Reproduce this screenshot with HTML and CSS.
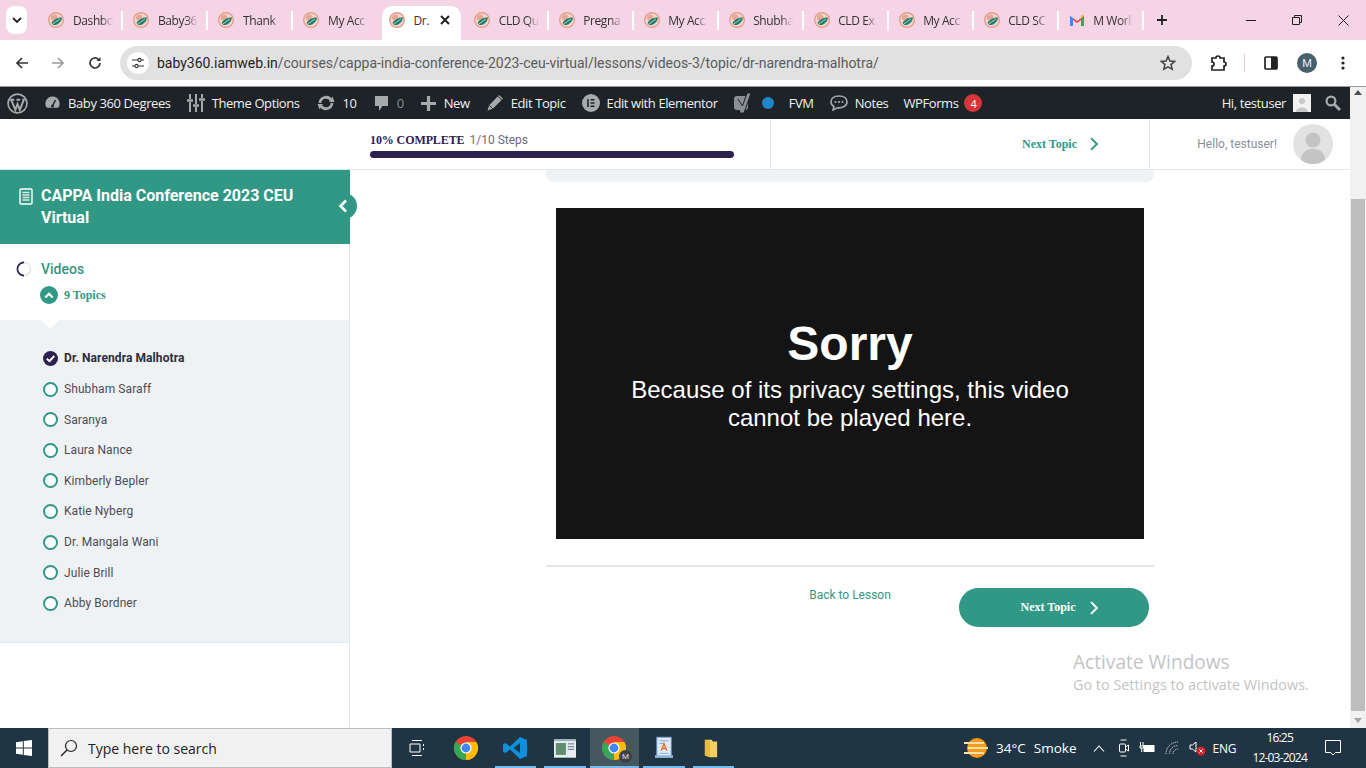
FILE: index.html
```html
<!DOCTYPE html>
<html lang="en">
<head>
    <meta charset="UTF-8">
    <meta name="viewport" content="width=device-width, initial-scale=1.0">
    <title>Dr. Narendra Malhotra</title>
    <link rel="stylesheet" href="styles.css">
</head>
<body>
    <svg class="defs" width="0" height="0">
        <symbol id="fav" viewBox="0 0 16 16">
            <circle cx="8" cy="8" r="8" fill="#e59f8e"/>
            <circle cx="8" cy="8" r="6.6" fill="#f4d6cc"/>
            <circle cx="6.2" cy="5.6" r="3.2" fill="#e6a796"/>
            <path d="M3.5 11 C6 7 10 5.5 14 5.5 C13.5 10 9.5 13.5 5.5 13 Z" fill="#1f7c6c"/>
            <path d="M5 11.8 L12 7" stroke="#cfe9e1" stroke-width=".8"/>
        </symbol>
        <symbol id="chev" viewBox="0 0 12 12">
            <path d="M3.5 1 L8.5 6 L3.5 11" fill="none" stroke="currentColor" stroke-width="1.7"/>
        </symbol>
    </svg>

    <!-- chrome tabs -->
    <div class="tabstrip">
        <div class="tab-menu"><svg width="10" height="6" viewBox="0 0 10 6"><path d="M1 1 L5 5 L9 1" fill="none" stroke="#222" stroke-width="1.8"/></svg></div>
        <div class="tab"><svg class="fav"><use href="#fav"/></svg><span class="tab-name">Dashbo</span></div>
        <div class="tab"><svg class="fav"><use href="#fav"/></svg><span class="tab-name">Baby36</span></div>
        <div class="tab"><svg class="fav"><use href="#fav"/></svg><span class="tab-name">Thank</span></div>
        <div class="tab no-sep"><svg class="fav"><use href="#fav"/></svg><span class="tab-name">My Acc</span></div>
        <div class="tab active"><svg class="fav"><use href="#fav"/></svg><span class="tab-name">Dr.</span>
            <svg class="tab-x" width="10" height="10" viewBox="0 0 10 10"><path d="M1 1 L9 9 M9 1 L1 9" stroke="#222" stroke-width="2"/></svg>
        </div>
        <div class="tab"><svg class="fav"><use href="#fav"/></svg><span class="tab-name">CLD Qu</span></div>
        <div class="tab"><svg class="fav"><use href="#fav"/></svg><span class="tab-name">Pregna</span></div>
        <div class="tab"><svg class="fav"><use href="#fav"/></svg><span class="tab-name">My Acc</span></div>
        <div class="tab"><svg class="fav"><use href="#fav"/></svg><span class="tab-name">Shubha</span></div>
        <div class="tab"><svg class="fav"><use href="#fav"/></svg><span class="tab-name">CLD Ex</span></div>
        <div class="tab"><svg class="fav"><use href="#fav"/></svg><span class="tab-name">My Acc</span></div>
        <div class="tab"><svg class="fav"><use href="#fav"/></svg><span class="tab-name">CLD SC</span></div>
        <div class="tab">
            <svg class="fav" viewBox="0 0 16 12"><path d="M1 12 V2 L8 7 L15 2 V12 H12 V6 L8 9 L4 6 V12 Z" fill="#ea4335"/><path d="M1 12 V2 L4 4.2 V12 Z" fill="#4285f4"/><path d="M12 12 V4.2 L15 2 V12 Z" fill="#34a853"/><path d="M12 4.2 L15 2 L13.5 0.8 L12 2 Z" fill="#fbbc04"/></svg>
            <span class="tab-name">M Worl</span>
        </div>
        <div class="tab-new"><svg width="12" height="12" viewBox="0 0 12 12"><path d="M6 1 V11 M1 6 H11" stroke="#222" stroke-width="1.8"/></svg></div>
        <div class="win-btns">
            <svg width="10" height="10" viewBox="0 0 10 10"><path d="M0 5.5 H10" stroke="#222" stroke-width="1"/></svg>
            <svg width="10" height="10" viewBox="0 0 10 10"><path d="M.5 2.5 H7.5 V9.5 H.5 Z M2.5 2.5 V.5 H9.5 V7.5 H7.5" fill="none" stroke="#222"/></svg>
            <svg width="11" height="11" viewBox="0 0 11 11"><path d="M.5 .5 L10.5 10.5 M10.5 .5 L.5 10.5" stroke="#222"/></svg>
        </div>
    </div>

    <!-- address bar -->
    <div class="toolbar">
        <svg class="nav-ic" viewBox="0 0 14 14"><path d="M13 7 H2 M7 2 L2 7 L7 12" fill="none" stroke="#333" stroke-width="1.7"/></svg>
        <svg class="nav-ic" viewBox="0 0 14 14"><path d="M1 7 H12 M7 2 L12 7 L7 12" fill="none" stroke="#9a9a9a" stroke-width="1.7"/></svg>
        <svg class="nav-ic" viewBox="0 0 14 14"><path d="M12 7 A5 5 0 1 1 10.4 3.3" fill="none" stroke="#333" stroke-width="1.7"/><path d="M12.5 1 V5 H8.5 Z" fill="#333"/></svg>
        <div class="omnibox">
            <div class="site-ic"><svg width="12" height="12" viewBox="0 0 12 12"><path d="M0 3 H6 M9 3 H12 M0 9 H3 M6 9 H12" stroke="#333" stroke-width="1.2"/><circle cx="7.5" cy="3" r="1.6" fill="none" stroke="#333" stroke-width="1.1"/><circle cx="4.5" cy="9" r="1.6" fill="none" stroke="#333" stroke-width="1.1"/></svg></div>
            <div class="url"><span class="host">baby360.iamweb.in</span>/courses/cappa-india-conference-2023-ceu-virtual/lessons/videos-3/topic/dr-narendra-malhotra/</div>
            <svg class="star" width="16" height="16" viewBox="0 0 16 16"><path d="M8 1.5 L9.9 6 L14.7 6.4 L11 9.6 L12.2 14.3 L8 11.8 L3.8 14.3 L5 9.6 L1.3 6.4 L6.1 6 Z" fill="none" stroke="#444" stroke-width="1.5"/></svg>
        </div>
        <div class="tool-right">
            <svg width="18" height="18" viewBox="0 0 18 18"><path d="M2 4 H6 A2 2 0 0 1 10 4 H14 V8 A2 2 0 0 1 14 12 V16 H2 V12 A2 2 0 0 0 2 8 Z" fill="none" stroke="#222" stroke-width="1.7"/></svg>
            <span class="tool-sep"></span>
            <svg width="14" height="14" viewBox="0 0 14 14"><rect x="1" y="1" width="12" height="12" rx="1" fill="none" stroke="#222" stroke-width="1.7"/><rect x="7" y="1" width="6" height="12" fill="#222"/></svg>
            <span class="profile">M</span>
            <svg width="4" height="14" viewBox="0 0 4 14"><circle cx="2" cy="2" r="1.6" fill="#222"/><circle cx="2" cy="7" r="1.6" fill="#222"/><circle cx="2" cy="12" r="1.6" fill="#222"/></svg>
        </div>
    </div>

    <div class="viewport">
        <div class="page">
            <!-- wp admin bar -->
            <div class="adminbar">
                <div class="ab-group">
                    <span class="ab-item wp-logo"><svg width="21" height="21" viewBox="0 0 20 20"><circle cx="10" cy="10" r="9" fill="none" stroke="#a7aaad" stroke-width="1.6"/><path d="M4 6.5 L8 16 L10 10.5 L12.2 16 L16 6.5 M3 6.5 H7 M9 6.5 H12.5 M14.5 6.5 H17" fill="none" stroke="#a7aaad" stroke-width="1.9"/></svg></span>
                    <span class="ab-item"><svg width="17" height="16" viewBox="0 0 16 16"><path d="M8 1.5 A7 7 0 0 0 2.4 12.8 H13.6 A7 7 0 0 0 8 1.5 Z" fill="#a7aaad"/><path d="M8 11 L11 5" stroke="#1d2327" stroke-width="1.6"/><circle cx="8" cy="11" r="1.5" fill="#1d2327"/></svg>Baby 360 Degrees</span>
                    <span class="ab-item"><svg width="18" height="18" viewBox="0 0 18 18"><path d="M3 0 V5 M3 8 V18 M9 0 V10 M9 13 V18 M15 0 V4 M15 7 V18" stroke="#a7aaad" stroke-width="2"/><path d="M0 6.5 H6 M6 11.5 H12 M12 5.5 H18" stroke="#a7aaad" stroke-width="2.4"/></svg>Theme Options</span>
                    <span class="ab-item ab-wide"><svg width="18" height="16" viewBox="0 0 18 16"><path d="M3 8 A6 6 0 0 1 14 5 M15 8 A6 6 0 0 1 4 11" fill="none" stroke="#a7aaad" stroke-width="2.8"/><path d="M12 7 L17.5 7 L15.5 1.5 Z M6 9 L.5 9 L2.5 14.5 Z" fill="#a7aaad"/></svg>10</span>
                    <span class="ab-item ab-wide dim"><svg width="15" height="17" viewBox="0 0 15 17"><path d="M1 1 H14 V11 H8.5 L5 16 V11 H1 Z" fill="#a7aaad"/></svg>0</span>
                    <span class="ab-item ab-wide"><svg width="15" height="15" viewBox="0 0 14 14"><path d="M7 0 V14 M0 7 H14" stroke="#a7aaad" stroke-width="3"/></svg>New</span>
                    <span class="ab-item ab-wide"><svg width="16" height="16" viewBox="0 0 15 15"><path d="M0.5 14.5 L2 9.5 L10 1.5 L13.5 5 L5.5 13 Z" fill="#a7aaad"/><path d="M11 .5 L14.5 4" stroke="#a7aaad" stroke-width="1.4"/><path d="M2 9.5 L5.5 13" stroke="#1d2327" stroke-width=".8"/></svg>Edit Topic</span>
                    <span class="ab-item"><svg width="18" height="18" viewBox="0 0 18 18"><circle cx="9" cy="9" r="9" fill="#a7aaad"/><path d="M6 5 V13" stroke="#1d2327" stroke-width="1.6"/><path d="M8.5 5.8 H12.5 M8.5 9 H12.5 M8.5 12.2 H12.5" stroke="#1d2327" stroke-width="1.5"/></svg>Edit with Elementor</span>
                    <span class="ab-item yoast"><svg width="18" height="22" viewBox="0 0 18 22"><rect x="0" y="4" width="14" height="14" rx="3" fill="#8c8f94"/><path d="M4 7 L8.5 14 L13 1 H17 L10 21 H6.5" fill="#8c8f94" stroke="#1d2327"/></svg><i class="dot"></i></span>
                    <span class="ab-item ab-tight">FVM</span>
                    <span class="ab-item"><svg width="18" height="16" viewBox="0 0 18 16"><path d="M9 1 C4 1 1 3.5 1 7 C1 9 2 10.5 4 11.5 L3 15 L7.5 12.8 C12.5 13.2 17 11 17 7 C17 3.5 14 1 9 1 Z" fill="none" stroke="#a7aaad" stroke-width="1.6"/><circle cx="5.5" cy="7" r="1.1" fill="#a7aaad"/><circle cx="9" cy="7" r="1.1" fill="#a7aaad"/><circle cx="12.5" cy="7" r="1.1" fill="#a7aaad"/></svg>Notes</span>
                    <span class="ab-item ab-tight">WPForms<b class="count">4</b></span>
                </div>
                <div class="ab-group ab-right">
                    <span class="ab-item">Hi, testuser<i class="ab-avatar"><svg width="18" height="18" viewBox="0 0 18 18"><circle cx="9" cy="7" r="3" fill="#c9c9c9"/><path d="M3 18 C3 12 15 12 15 18 Z" fill="#c9c9c9"/></svg></i></span>
                    <span class="ab-item"><svg width="16" height="16" viewBox="0 0 16 16"><circle cx="6" cy="6" r="4.4" fill="none" stroke="#a7aaad" stroke-width="2.2"/><path d="M9.5 9.5 L15 15" stroke="#a7aaad" stroke-width="3"/></svg></span>
                </div>
            </div>

            <!-- lesson header -->
            <div class="lesson-top">
                <div class="progress-cell">
                    <div class="progress-label"><strong>10% COMPLETE</strong> <span>1/10 Steps</span></div>
                    <div class="progress-bar"></div>
                </div>
                <div class="next-cell"><span>Next Topic</span><svg width="14" height="14"><use href="#chev"/></svg></div>
                <div class="user-cell">
                    <span>Hello, testuser!</span>
                    <svg class="user-pic" viewBox="0 0 40 40"><circle cx="20" cy="20" r="20" fill="#e2e2e2"/><circle cx="20" cy="16" r="7.5" fill="#c4c4c4"/><path d="M8 36 C8 21 32 21 32 36 A20 20 0 0 1 8 36 Z" fill="#c4c4c4"/></svg>
                </div>
            </div>

            <div class="lesson-body">
                <aside class="sidebar">
                    <div class="course-title">
                        <svg width="14" height="17" viewBox="0 0 14 17"><rect x="1" y="1" width="12" height="15" rx="1" fill="none" stroke="#fff" stroke-width="1.4"/><path d="M3.5 4.5 H10.5 M3.5 7 H10.5 M3.5 9.5 H10.5 M3.5 12 H10.5" stroke="#d5e8e3" stroke-width="1.4"/></svg>
                        <span>CAPPA India Conference 2023 CEU Virtual</span>
                        <div class="collapse-btn"><svg width="10" height="14" viewBox="0 0 10 14"><path d="M8 1.5 L2.5 7 L8 12.5" fill="none" stroke="#fff" stroke-width="2.6"/></svg></div>
                    </div>
                    <div class="section-head">
                        <div class="section-name">
                            <svg width="16" height="16" viewBox="0 0 16 16"><circle cx="8" cy="8" r="6.6" fill="none" stroke="#e6e6ee" stroke-width="1.7"/><path d="M8 1.4 A6.6 6.6 0 0 0 8 14.6" fill="none" stroke="#2d2150" stroke-width="1.7"/></svg>
                            <span>Videos</span>
                        </div>
                        <div class="section-count">
                            <i class="toggle"><svg width="10" height="7" viewBox="0 0 10 7"><path d="M1.3 5.5 L5 1.8 L8.7 5.5" fill="none" stroke="#fff" stroke-width="2.2"/></svg></i>
                            <span>9 Topics</span>
                        </div>
                    </div>
                    <ul class="topics">
                        <li class="done"><svg width="15" height="15" viewBox="0 0 15 15"><circle cx="7.5" cy="7.5" r="7.5" fill="#2d2150"/><path d="M3.8 7.8 L6.5 10.2 L11.2 5" fill="none" stroke="#fff" stroke-width="2"/></svg>Dr. Narendra Malhotra</li>
                        <li><i class="ring"></i>Shubham Saraff</li>
                        <li><i class="ring"></i>Saranya</li>
                        <li><i class="ring"></i>Laura Nance</li>
                        <li><i class="ring"></i>Kimberly Bepler</li>
                        <li><i class="ring"></i>Katie Nyberg</li>
                        <li><i class="ring"></i>Dr. Mangala Wani</li>
                        <li><i class="ring"></i>Julie Brill</li>
                        <li><i class="ring"></i>Abby Bordner</li>
                    </ul>
                </aside>

                <main class="content">
                    <div class="notice-end"></div>
                    <div class="video">
                        <h2>Sorry</h2>
                        <p>Because of its privacy settings, this video cannot be played here.</p>
                    </div>
                    <div class="lesson-nav">
                        <a class="back-link">Back to Lesson</a>
                        <a class="next-btn"><span>Next Topic</span><svg width="14" height="14"><use href="#chev"/></svg></a>
                    </div>
                </main>
            </div>
        </div>

        <div class="scrollbar">
            <i class="arrow-up"></i>
            <div class="thumb"></div>
            <i class="arrow-down"></i>
        </div>

        <div class="activate">
            <div class="activate-title">Activate Windows</div>
            <div>Go to Settings to activate Windows.</div>
        </div>
    </div>

    <!-- windows taskbar -->
    <div class="taskbar">
        <div class="start"><svg width="16" height="16" viewBox="0 0 16 16"><path d="M0 2.3 L6.8 1.3 V7.5 H0 Z M7.8 1.1 L16 0 V7.5 H7.8 Z M0 8.5 H6.8 V14.7 L0 13.7 Z M7.8 8.5 H16 V16 L7.8 14.9 Z" fill="#fff"/></svg></div>
        <div class="search">
            <svg width="18" height="18" viewBox="0 0 18 18"><circle cx="11" cy="7" r="5.5" fill="none" stroke="#222" stroke-width="1.2"/><path d="M7 11 L1 17" stroke="#222" stroke-width="1.4"/></svg>
            <span>Type here to search</span>
        </div>
        <div class="task-apps">
            <div class="app"><svg width="16" height="16" viewBox="0 0 16 16"><path d="M3 .5 H13 M3 15.5 H13 M1 4 H11 V12 H1 Z M14.5 4 V6 M14.5 8 V10" fill="none" stroke="#fff"/></svg></div>
            <div class="app"><svg width="24" height="24" viewBox="0 0 24 24"><circle cx="12" cy="12" r="12" fill="#ea4335"/><path d="M12 12 L1.6 6 A12 12 0 0 0 12 24 Z" fill="#34a853"/><path d="M12 6 H22.4 A12 12 0 0 1 12 24 L12 12 Z" fill="#fbbc04"/><circle cx="12" cy="12" r="5.6" fill="#fff"/><circle cx="12" cy="12" r="4.4" fill="#4285f4"/></svg></div>
            <div class="app open"><svg width="24" height="24" viewBox="0 0 24 24"><path d="M17 1 L24 4 V20 L17 23 L7 13.5 L2.5 17 L0 15.5 V8.5 L2.5 7 L7 10.5 Z M17 7 L10.5 12 L17 17 Z" fill="#0f8fdc" fill-rule="evenodd"/></svg></div>
            <div class="app open"><svg width="22" height="19" viewBox="0 0 24 20"><rect width="24" height="20" fill="#e8eef0"/><rect y="0" width="24" height="2" fill="#a0b4c0"/><rect x="2" y="4" width="11" height="13" fill="#5f8f70"/><path d="M15 5 H22 M15 8 H22 M15 11 H22" stroke="#789" stroke-width="1.4"/></svg></div>
            <div class="app open running">
                <svg width="24" height="24" viewBox="0 0 24 24"><circle cx="12" cy="12" r="12" fill="#ea4335"/><path d="M12 12 L1.6 6 A12 12 0 0 0 12 24 Z" fill="#34a853"/><path d="M12 6 H22.4 A12 12 0 0 1 12 24 L12 12 Z" fill="#fbbc04"/><circle cx="12" cy="12" r="5.6" fill="#fff"/><circle cx="12" cy="12" r="4.4" fill="#4285f4"/></svg>
                <b class="app-badge">M</b>
            </div>
            <div class="app open"><svg width="18" height="24" viewBox="0 0 20 24"><rect x="2" y="0" width="16" height="22" fill="#dfeaf5" stroke="#6c9cd0"/><path d="M5 4 H15 M5 7 H9 M5 18 H15" stroke="#7aa5d6"/><path d="M7 15 L10 7 L13 15 M8 12.5 H12" fill="none" stroke="#e0762c" stroke-width="1.6"/><rect x="0" y="20" width="20" height="3" fill="#8fb4dc"/></svg></div>
            <div class="app open folder"><svg width="14" height="21" viewBox="0 0 16 22"><path d="M1 1 H9 L10 3 H15 V21 H7 L1 19 Z" fill="#f3cf62"/><path d="M1 1 L7 3 V21 L1 19 Z" fill="#e9bb3e"/></svg></div>
        </div>
        <div class="tray">
            <div class="weather">
                <svg width="24" height="22" viewBox="0 0 24 22"><circle cx="13" cy="11" r="10" fill="#f59a1c"/><path d="M0 6 H20 M4 11 H24 M0 16 H20" stroke="#f6e0a8" stroke-width="2"/></svg>
                <span>34°C</span><span>Smoke</span>
            </div>
            <svg class="tray-ic caret" width="12" height="7" viewBox="0 0 12 7"><path d="M1 6.5 L6 1 L11 6.5" fill="none" stroke="#fff" stroke-width="1.1"/></svg>
            <svg class="tray-ic" width="11" height="18" viewBox="0 0 10 18"><rect x="1" y="5" width="6" height="8" rx="1" fill="none" stroke="#fff"/><path d="M7 8 L10 6 V12 L7 10 M2 1 H8 M2 17 H8" fill="none" stroke="#fff"/></svg>
            <svg class="tray-ic" width="16" height="12" viewBox="0 0 15 12"><rect x="4" y="3" width="11" height="7" fill="#fff"/><path d="M1 0 V4 M3.5 0 V4 M.5 4 H4 V6 H.5 Z M2.2 6 V10" stroke="#fff" fill="none"/></svg>
            <svg class="tray-ic" width="14" height="14" viewBox="0 0 14 14"><path d="M1 13 A12 12 0 0 1 13 1 M4.5 13 A8.5 8.5 0 0 1 13 4.5 M8 13 A5 5 0 0 1 13 8" fill="none" stroke="#cfd8dc" stroke-dasharray="1.4 .8"/></svg>
            <svg class="tray-ic" width="17" height="16" viewBox="0 0 17 16"><path d="M1 5 H3.5 L7 2 V12 L3.5 9 H1 Z" fill="none" stroke="#fff"/><circle cx="12" cy="11" r="4.5" fill="#d8232a"/><path d="M10.3 9.3 L13.7 12.7 M13.7 9.3 L10.3 12.7" stroke="#fff"/></svg>
            <span class="lang">ENG</span>
            <div class="clock"><div>16:25</div><div>12-03-2024</div></div>
            <svg class="notif" width="16" height="16" viewBox="0 0 16 16"><path d="M.5 .5 H15.5 V12.5 H10.5 L8 15 L5.5 12.5 H.5 Z" fill="none" stroke="#fff"/></svg>
        </div>
    </div>
</body>
</html>
```

FILE: styles.css
```css
* {
    box-sizing: border-box;
}

html, body {
    margin: 0;
    height: 768px;
    overflow: hidden;
}

body {
    display: flex;
    flex-direction: column;
    font-family: Roboto, "Liberation Sans", sans-serif;
    background: #fff;
}

.defs {
    position: absolute;
}

/* chrome tabs */
.tabstrip {
    display: flex;
    align-items: flex-end;
    height: 40px;
    background: #f5d4e5;
    padding-left: 6px;
    flex: none;
}

.tab-menu {
    width: 21px;
    height: 28px;
    margin: 0 11.4px 6px 0;
    background: #fff;
    border-radius: 8px;
    display: flex;
    align-items: center;
    justify-content: center;
}

.tab {
    display: flex;
    align-items: center;
    width: 85px;
    height: 34px;
    padding: 0 0 6px 10px;
    position: relative;
    flex: none;
}

.tab::after {
    content: "";
    position: absolute;
    right: 0;
    top: 5px;
    width: 2px;
    height: 19px;
    background: #fff;
}

.tab.active {
    width: 79px;
    margin-left: 3.2px;
    padding-left: 7.4px;
    background: #fff;
    border-radius: 10px 10px 0 0;
}

.tab.active::after,
.tab.no-sep::after {
    display: none;
}

.tab.active + .tab {
    width: 88px;
    padding-left: 13.6px;
}

.fav {
    width: 16px;
    height: 16px;
    flex: none;
}

.tab-name {
    margin-left: 8.6px;
    width: 40px;
    font-family: "Open Sans", "Liberation Sans", sans-serif;
    font-size: 12px;
    letter-spacing: -0.4px;
    white-space: nowrap;
    color: #333;
    -webkit-mask-image: linear-gradient(to right, #000 70%, transparent);
    mask-image: linear-gradient(to right, #000 70%, transparent);
}

.active .tab-name {
    width: 16px;
    -webkit-mask-image: none;
    mask-image: none;
}

.tab-x {
    margin-left: 10px;
}

.tab-new {
    display: flex;
    align-items: center;
    margin: 0 0 14px 12px;
    height: 12px;
}

.win-btns {
    display: flex;
    align-items: center;
    gap: 36px;
    margin-left: auto;
    padding: 15px 17px 15px 0;
    height: 40px;
    justify-content: flex-end;
}

/* address bar */
.toolbar {
    display: flex;
    align-items: center;
    height: 46px;
    background: #fff;
    flex: none;
    padding-left: 15px;
}

.nav-ic {
    width: 14px;
    height: 14px;
    margin-right: 22px;
    flex: none;
}

.nav-ic:nth-child(2) {
    margin-right: 23px;
}

.nav-ic:nth-child(3) {
    margin-right: 18px;
}

.omnibox {
    display: flex;
    align-items: center;
    width: 1072px;
    height: 34px;
    background: #e1e1e1;
    border-radius: 17px;
    padding: 0 16px 0 7px;
    flex: none;
}

.site-ic {
    width: 22px;
    height: 22px;
    border-radius: 50%;
    background: #fff;
    display: flex;
    align-items: center;
    justify-content: center;
    margin-right: 8px;
}

.url {
    flex: 1;
    font-family: Roboto, "Liberation Sans", sans-serif;
    font-size: 14px;
    letter-spacing: -0.02px;
    color: #5b5b5b;
    white-space: nowrap;
}

.host {
    color: #1f1f1f;
}

.tool-right {
    display: flex;
    align-items: center;
    margin-left: 18px;
}

.tool-sep {
    width: 1px;
    height: 18px;
    background: #f2c6da;
    margin: 0 19px 0 16px;
}

.profile {
    width: 20px;
    height: 20px;
    margin: 0 24px 0 19px;
    border-radius: 50%;
    background: #47606e;
    color: #e4ecef;
    font-size: 11px;
    display: flex;
    align-items: center;
    justify-content: center;
}

/* page area */
.viewport {
    flex: 1;
    display: flex;
    position: relative;
    min-height: 0;
    border-top: 1px solid #9a9a9a;
}

.page {
    width: 1350px;
    display: flex;
    flex-direction: column;
}

.adminbar {
    display: flex;
    justify-content: space-between;
    height: 32px;
    background: #1d2327;
    color: #f0f0f1;
    font-family: "Open Sans", "Liberation Sans", sans-serif;
    font-size: 13px;
    letter-spacing: -0.4px;
    flex: none;
    padding: 0 9px 0 7px;
}

.ab-group {
    display: flex;
    align-items: center;
    gap: 16px;
}

.ab-right {
    gap: 14px;
}

.ab-item {
    display: flex;
    align-items: center;
    gap: 7px;
    white-space: nowrap;
}

.ab-item.ab-wide {
    gap: 8px;
    margin-left: 1px;
}

.ab-item.ab-tight {
    margin-left: -1px;
}

.ab-item.dim {
    color: #8c8f94;
}

.yoast {
    gap: 10px;
}

.dot {
    width: 12px;
    height: 12px;
    border-radius: 50%;
    background: #1c86c6;
}

.count {
    width: 18px;
    height: 18px;
    margin-left: -1px;
    border-radius: 50%;
    background: #d63638;
    color: #fff;
    font-weight: 400;
    font-size: 11px;
    display: flex;
    align-items: center;
    justify-content: center;
}

.ab-avatar {
    width: 18px;
    height: 18px;
    background: #f1f1f1;
    display: block;
}

.ab-avatar svg {
    display: block;
}

.lesson-top {
    display: flex;
    height: 51px;
    background: #fff;
    border-bottom: 1px solid #e4e7ea;
    flex: none;
}

.progress-cell {
    width: 421px;
    margin-left: 350px;
    padding: 14px 0 0 20px;
    border-right: 1px solid #e2e7ed;
}

.progress-label {
    font-size: 12px;
    color: #6b6b76;
    height: 18px;
}

.progress-label strong {
    font-family: "Liberation Serif", serif;
    color: #2d2150;
    margin-right: 2px;
    letter-spacing: -0.1px;
}

.progress-bar {
    width: 364px;
    height: 7px;
    border-radius: 4px;
    background: #2d2150;
}

.next-cell {
    width: 379px;
    display: flex;
    align-items: center;
    color: #319885;
    font-family: "Liberation Serif", serif;
    font-weight: 700;
    font-size: 12px;
    padding-left: 251px;
    border-right: 1px solid #e2e7ed;
    gap: 10px;
}

.user-cell {
    flex: 1;
    display: flex;
    align-items: center;
    justify-content: flex-end;
    gap: 16px;
    padding-right: 17px;
    font-size: 12px;
    color: #8a9096;
}

.user-pic {
    width: 40px;
    height: 40px;
}

.lesson-body {
    flex: 1;
    display: flex;
    min-height: 0;
}

/* sidebar */
.sidebar {
    width: 350px;
    border-right: 1px solid #e2e7ed;
    flex: none;
}

.course-title {
    position: relative;
    display: flex;
    gap: 8px;
    height: 74px;
    margin-right: -1px;
    padding: 15px 40px 0 19px;
    background: #319885;
    color: #fff;
    font-weight: 700;
    font-size: 16px;
    line-height: 22px;
}

.course-title svg {
    flex: none;
    margin-top: 3px;
}

.collapse-btn {
    position: absolute;
    top: 23px;
    right: -7px;
    width: 26px;
    height: 26px;
    border-radius: 50%;
    background: #319885;
    display: flex;
    align-items: center;
    padding-left: 7px;
}

.collapse-btn svg {
    margin: 0;
}

.section-head {
    height: 76px;
    padding: 16px 0 0 16px;
}

.section-name {
    display: flex;
    align-items: center;
    gap: 9px;
    color: #319885;
    font-weight: 500;
    font-size: 14px;
    height: 18px;
}

.section-count {
    display: flex;
    align-items: center;
    gap: 6px;
    margin: 8px 0 0 24px;
    color: #319885;
    font-family: "Liberation Serif", serif;
    font-weight: 700;
    font-size: 12px;
}

.toggle {
    width: 18px;
    height: 18px;
    border-radius: 50%;
    background: #319885;
    display: flex;
    align-items: center;
    justify-content: center;
}

.topics {
    position: relative;
    list-style: none;
    margin: 0;
    padding: 23.2px 0 0 43px;
    height: 323px;
    background: #eef2f5;
    border-bottom: 1px solid #e2e7ed;
}

.topics::before {
    content: "";
    position: absolute;
    top: 0;
    left: 41px;
    border: 9px solid transparent;
    border-bottom: 0;
    border-top-color: #fff;
}

.topics li {
    display: flex;
    align-items: center;
    gap: 6px;
    height: 30.6px;
    font-size: 12px;
    letter-spacing: 0.08px;
    color: #4d4d55;
}

.topics li.done {
    font-weight: 700;
    color: #2e2e38;
}

.ring {
    width: 15px;
    height: 15px;
    border-radius: 50%;
    border: 2px solid #319885;
    background: #fff;
}

/* main column */
.content {
    flex: 1;
    display: flex;
    flex-direction: column;
    padding: 0 196px;
}

.notice-end {
    height: 12px;
    background: #eef2f5;
    border-radius: 0 0 8px 8px;
}

.video {
    height: 331px;
    margin: 26px 10px 0;
    background: #141414;
    color: #fff;
    font-family: "Liberation Sans", sans-serif;
    text-align: center;
    padding-top: 106px;
}

.video h2 {
    margin: 0;
    font-size: 48px;
    line-height: 60px;
}

.video p {
    margin: 2px auto 0;
    width: 470px;
    font-size: 24px;
    line-height: 28px;
}

.lesson-nav {
    display: flex;
    margin-top: 26px;
    height: 62px;
    border-top: 2px solid #e2e7ed;
    position: relative;
    justify-content: flex-end;
    padding: 21px 5px 0 0;
}

.back-link {
    position: absolute;
    top: 21px;
    left: 0;
    right: 0;
    text-align: center;
    font-size: 12px;
    color: #319885;
}

.next-btn {
    position: relative;
    width: 190px;
    height: 39px;
    border-radius: 20px;
    background: #319885;
    color: #fff;
    font-family: "Liberation Serif", serif;
    font-weight: 700;
    font-size: 12px;
    display: flex;
    align-items: center;
    justify-content: center;
    gap: 11px;
    padding-left: 13px;
}

/* scrollbar */
.scrollbar {
    width: 16px;
    background: #f1f1f1;
    display: flex;
    flex-direction: column;
    align-items: stretch;
}

.thumb {
    height: 512px;
    margin: 112px 1px 0;
    background: #bdbdbd;
}

.arrow-up,
.arrow-down {
    position: absolute;
    right: 4px;
    border: 4px solid transparent;
}

.arrow-up {
    top: 3px;
    border-top: 0;
    border-bottom: 5px solid #505050;
}

.arrow-down {
    bottom: 5px;
    border-bottom: 0;
    border-top: 5px solid #a3a3a3;
}

.activate {
    position: absolute;
    left: 1073px;
    top: 562px;
    color: #c4c4c4;
    font-family: "Open Sans", "Liberation Sans", sans-serif;
    font-size: 14.4px;
    line-height: 20px;
}

.activate-title {
    font-size: 19.1px;
    line-height: 26px;
}

/* taskbar */
.taskbar {
    display: flex;
    align-items: stretch;
    height: 40px;
    background: #1f3543;
    color: #fff;
    flex: none;
}

.start {
    width: 48px;
    display: flex;
    align-items: center;
    justify-content: center;
}

.search {
    width: 344px;
    display: flex;
    align-items: center;
    gap: 10px;
    padding-left: 11px;
    background: #f1f1f1;
    border: 1px solid #b8bec2;
    color: #222;
    font-family: "Open Sans", "Liberation Sans", sans-serif;
    font-size: 14px;
}

.task-apps {
    display: flex;
}

.app {
    position: relative;
    width: 49.5px;
    display: flex;
    align-items: center;
    justify-content: center;
}

.app:first-child {
    width: 49px;
}

.app.open::after {
    content: "";
    position: absolute;
    left: 4px;
    right: 4px;
    bottom: 0;
    height: 2px;
    background: #76b9ed;
}

.app.running {
    background: #46585f;
}

.app.running::after {
    left: 0;
    right: 0;
}

.folder svg {
    margin-right: 4px;
}

.app-badge {
    position: absolute;
    right: 7px;
    bottom: 5px;
    width: 13px;
    height: 13px;
    border-radius: 50%;
    background: #3c4043;
    color: #ddd;
    font-weight: 400;
    font-size: 8px;
    display: flex;
    align-items: center;
    justify-content: center;
}

.tray {
    margin-left: auto;
    display: flex;
    align-items: center;
    font-family: "Open Sans", "Liberation Sans", sans-serif;
    font-size: 13px;
}

.weather {
    display: flex;
    align-items: center;
    gap: 8px;
    margin-right: 16px;
    font-size: 13.5px;
}

.tray-ic {
    margin-right: 10px;
}

.tray-ic.caret {
    margin-right: 13px;
}

.lang {
    font-size: 12px;
    letter-spacing: -0.2px;
    margin: 0 16px 0 -3px;
}

.clock {
    text-align: center;
    font-size: 12px;
    letter-spacing: -0.8px;
    line-height: 20px;
}

.notif {
    margin: 0 25px 0 18px;
}
```
